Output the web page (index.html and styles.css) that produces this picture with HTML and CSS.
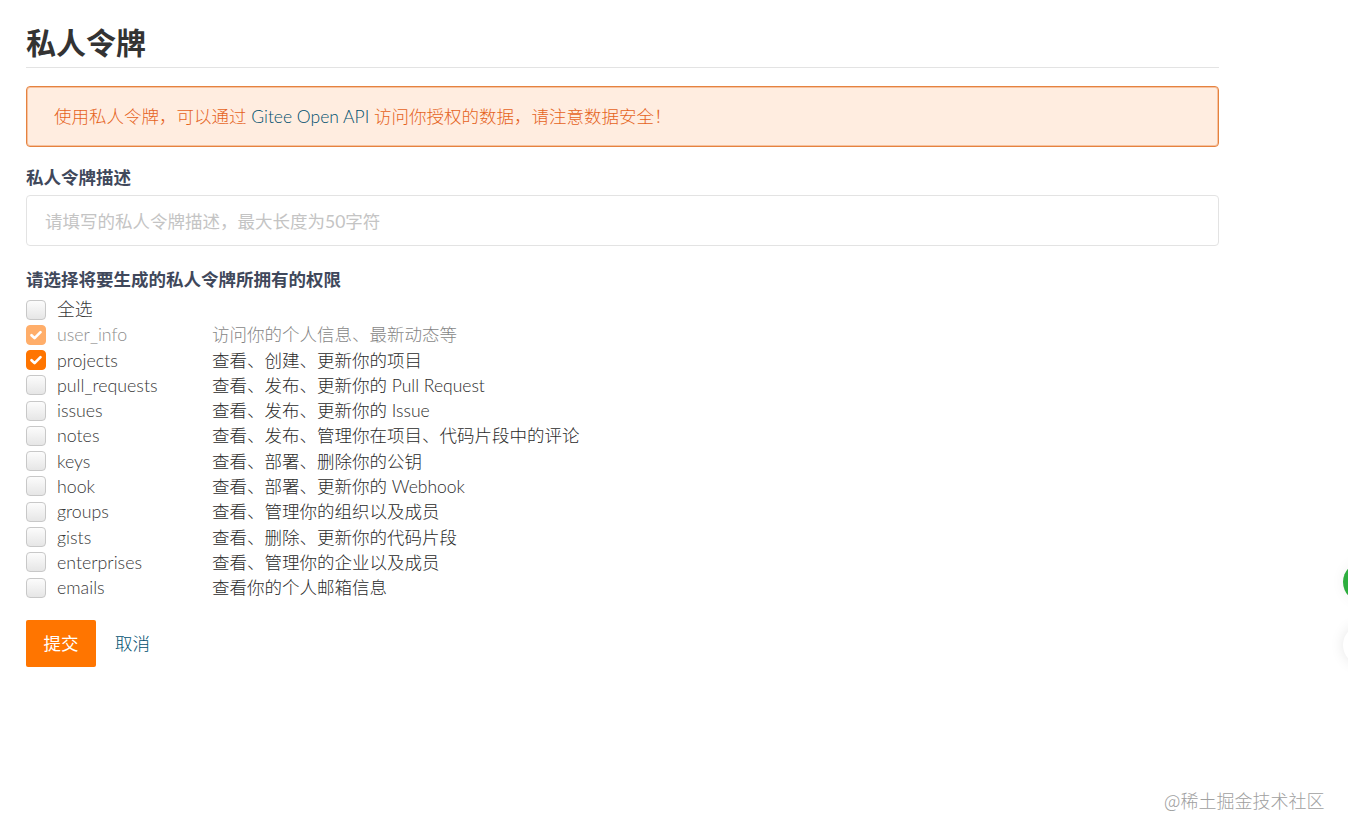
FILE: index.html
```html
<!DOCTYPE html>
<html lang="zh-CN">
<head>
<meta charset="utf-8">
<title>私人令牌</title>
<link rel="stylesheet" href="styles.css">
</head>
<body>
<main class="page">
  <h1 class="title">私人令牌</h1>
  <div class="alert">使用私人令牌&#xFF0C;可以通过 <a class="link" href="#">Gitee Open API</a> 访问你授权的数据&#xFF0C;请注意数据安全&#xFF01;</div>
  <form class="form">
    <label class="field-label" for="desc">私人令牌描述</label>
    <input class="input" id="desc" type="text" placeholder="请填写的私人令牌描述&#xFF0C;最大长度为50字符">
    <div class="field-label perm-label">请选择将要生成的私人令牌所拥有的权限</div>
    <div class="perms">
      <div class="row"><span class="box"></span><span class="name">全选</span><span></span></div>
      <div class="row disabled"><span class="box checked"><svg viewBox="0 0 20 20"><path d="M5 10.2l3.4 3.3L15 6.8" /></svg></span><span class="name">user_info</span><span>访问你的个人信息、最新动态等</span></div>
      <div class="row"><span class="box checked"><svg viewBox="0 0 20 20"><path d="M5 10.2l3.4 3.3L15 6.8" /></svg></span><span class="name">projects</span><span>查看、创建、更新你的项目</span></div>
      <div class="row"><span class="box"></span><span class="name">pull_requests</span><span>查看、发布、更新你的 Pull Request</span></div>
      <div class="row"><span class="box"></span><span class="name">issues</span><span>查看、发布、更新你的 Issue</span></div>
      <div class="row"><span class="box"></span><span class="name">notes</span><span>查看、发布、管理你在项目、代码片段中的评论</span></div>
      <div class="row"><span class="box"></span><span class="name">keys</span><span>查看、部署、删除你的公钥</span></div>
      <div class="row"><span class="box"></span><span class="name">hook</span><span>查看、部署、更新你的 Webhook</span></div>
      <div class="row"><span class="box"></span><span class="name">groups</span><span>查看、管理你的组织以及成员</span></div>
      <div class="row"><span class="box"></span><span class="name">gists</span><span>查看、删除、更新你的代码片段</span></div>
      <div class="row"><span class="box"></span><span class="name">enterprises</span><span>查看、管理你的企业以及成员</span></div>
      <div class="row"><span class="box"></span><span class="name">emails</span><span>查看你的个人邮箱信息</span></div>
    </div>
    <div class="actions">
      <button class="submit" type="button">提交</button>
      <a class="link cancel" href="#">取消</a>
    </div>
  </form>
</main>
<div class="float-green"></div>
<div class="float-white"></div>
<div class="watermark">@稀土掘金技术社区</div>
</body>
</html>
```
FILE: styles.css
```css
* { box-sizing: border-box; }
html, body { height: 100%; }
body {
  margin: 0;
  background: #fff;
  overflow: hidden;
  position: relative;
  font-family: Lato, "Noto Sans CJK SC", sans-serif;
  font-size: 17.5px;
  font-weight: 300;
  color: #333;
}
.page {
  width: 1219px;
  padding-left: 26px;
  padding-top: 20px;
}
.title {
  margin: 0;
  height: 48px;
  line-height: 44px;
  font-size: 30px;
  font-weight: 700;
  color: #333;
  border-bottom: 1px solid #e3e3e3;
}
.alert {
  margin-top: 18px;
  height: 61px;
  padding: 0 27px;
  line-height: 59px;
  color: #e5631c;
  background: #ffede0;
  border: 1px solid #e5823f;
  border-radius: 4px;
  box-shadow: inset 0 0 0 1px rgba(238, 141, 79, .45);
}
.link { color: #00506f; text-decoration: none; }
.form { display: flex; flex-direction: column; }
.field-label {
  margin-top: 18px;
  height: 30px;
  line-height: 26px;
  font-weight: 700;
  color: #40485b;
}
.input {
  height: 51px;
  padding: 2px 18px 0;
  font: inherit;
  color: #333;
  background: #fff;
  border: 1px solid #e3e3e3;
  border-radius: 4px;
  outline: none;
}
.input::placeholder { color: #c4c4c4; opacity: 1; font-weight: 400; }
.perm-label { margin-top: 21px; height: 26px; }
.perms { display: flex; flex-direction: column; margin-top: 4px; }
.row {
  display: grid;
  grid-template-columns: 20px 144px 1fr;
  column-gap: 11px;
  align-items: center;
  height: 25.27px;
  color: #2b2b2b;
  line-height: 25px;
}
.row .name { color: #383838; font-size: 17.8px; }
.row.disabled { opacity: .58; }
.box {
  display: block;
  width: 20px;
  height: 20px;
  border: 1px solid #c8c8c8;
  border-radius: 4px;
  background: linear-gradient(#fcfcfc, #e6e6e6);
}
.box.checked { background: #ff7500; border-color: #ff7500; }
.box svg { display: block; width: 18px; height: 18px; }
.box path { fill: none; stroke: #fff; stroke-width: 3; stroke-linecap: round; stroke-linejoin: round; }
.actions { display: flex; align-items: center; gap: 19px; margin-top: 20px; }
.cancel { margin-bottom: 2px; }
.submit {
  width: 70px;
  height: 47px;
  padding: 0 0 2px;
  font: inherit;
  font-weight: 400;
  color: #fff;
  background: #ff7500;
  border: 0;
  border-radius: 2px;
}
.float-green {
  position: absolute;
  left: 1343px;
  top: 562px;
  width: 40px;
  height: 40px;
  border-radius: 50%;
  background: #2dae3e;
  box-shadow: 0 0 14px rgba(0, 0, 0, .06);
}
.float-white {
  position: absolute;
  left: 1343px;
  top: 625px;
  width: 40px;
  height: 40px;
  border-radius: 50%;
  background: #fff;
  box-shadow: 0 0 14px rgba(0, 0, 0, .1);
}
.watermark {
  position: absolute;
  left: 1164px;
  top: 788px;
  font-family: "Noto Sans CJK SC", sans-serif;
  font-size: 18px;
  line-height: 24px;
  color: #a0a0a0;
  white-space: nowrap;
}
```
